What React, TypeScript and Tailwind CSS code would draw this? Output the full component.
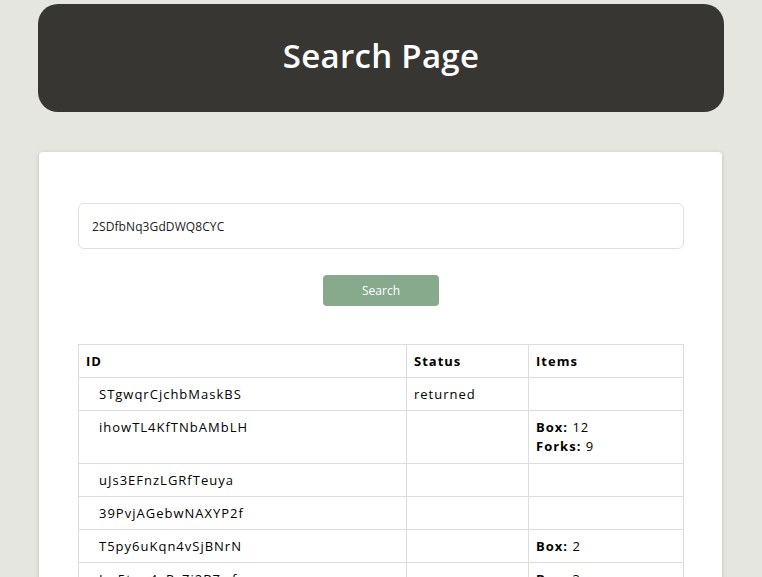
import { useState } from 'react';

interface Item {
  name: string;
  qty: number;
}

interface Order {
  id: string;
  status: string;
  items: Item[];
}

const orders: Order[] = [
  { id: 'STgwqrCjchbMaskBS', status: 'returned', items: [] },
  {
    id: 'ihowTL4KfTNbAMbLH',
    status: '',
    items: [
      { name: 'Box', qty: 12 },
      { name: 'Forks', qty: 9 },
    ],
  },
  { id: 'uJs3EFnzLGRfTeuya', status: '', items: [] },
  { id: '39PvjAGebwNAXYP2f', status: '', items: [] },
  { id: 'T5py6uKqn4vSjBNrN', status: '', items: [{ name: 'Box', qty: 2 }] },
  { id: 'Lw5tuq4xPzZi2BZwf', status: '', items: [{ name: 'Box', qty: 3 }] },
];

export default function App() {
  const [query, setQuery] = useState('2SDfbNq3GdDWQ8CYC');

  return (
    <div className="min-h-screen bg-[#e6e6e1] pt-[4px] pb-10 font-['Open_Sans','Noto_Sans',sans-serif] text-black">
      <header className="mx-[38px] flex h-[108px] items-center justify-center rounded-[20px] bg-[#383632]">
        <h1 className="-mt-[4px] text-[33px] font-semibold tracking-[0.3px] text-white">Search Page</h1>
      </header>

      <main className="ml-[39px] mr-[40px] mt-[40px] rounded-[4px] bg-white pl-[39px] pr-[38px] pt-[51px] pb-10 shadow-[0_1px_4px_rgba(0,0,0,0.18)]">
        <input
          value={query}
          onChange={(e) => setQuery(e.target.value)}
          className="block h-[46px] w-full rounded-[6px] border border-[#e0e0e0] px-[13px] text-[12px] tracking-[0.1px] text-[#222] outline-none"
        />

        <div className="mt-[26px] flex justify-center">
          <button className="h-[31px] w-[116px] rounded-[4px] bg-[#87a98c] text-[12px] text-white">
            Search
          </button>
        </div>

        <table className="mt-[38px] w-full table-fixed border-collapse text-[13px] leading-[18px] tracking-[1px]">
          <colgroup>
            <col className="w-[328px]" />
            <col className="w-[122px]" />
            <col />
          </colgroup>
          <thead>
            <tr>
              <th className="border border-[#dddddd] px-[7px] py-[7px] text-left font-bold">ID</th>
              <th className="border border-[#dddddd] px-[7px] py-[7px] text-left font-bold">Status</th>
              <th className="border border-[#dddddd] px-[7px] py-[7px] text-left font-bold">Items</th>
            </tr>
          </thead>
          <tbody>
            {orders.map((order) => (
              <tr key={order.id}>
                <td className="border border-[#dddddd] py-[7px] pl-[20px] pr-[7px] align-top">{order.id}</td>
                <td className="border border-[#dddddd] px-[7px] py-[7px] align-top">{order.status}</td>
                <td className="border border-[#dddddd] px-[7px] py-[7px] align-top">
                  {order.items.map((item) => (
                    <div key={item.name} className={order.items.length > 1 ? 'leading-[19px]' : ''}>
                      <span className="font-bold">{item.name}:</span> {item.qty}
                    </div>
                  ))}
                </td>
              </tr>
            ))}
          </tbody>
        </table>
      </main>
    </div>
  );
}
